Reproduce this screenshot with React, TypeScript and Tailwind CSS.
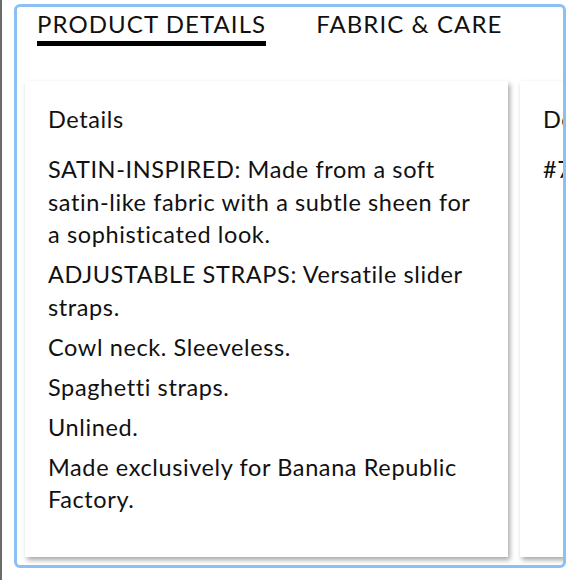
import React from "react";

const items = [
  "SATIN-INSPIRED: Made from a soft satin-like fabric with a subtle sheen for a sophisticated look.",
  "ADJUSTABLE STRAPS: Versatile slider straps.",
  "Cowl neck. Sleeveless.",
  "Spaghetti straps.",
  "Unlined.",
  "Made exclusively for Banana Republic Factory.",
];

export default function App() {
  return (
    <div className="relative w-[580px] h-[580px] bg-white overflow-hidden" style={{ fontFamily: "Lato, 'Noto Sans', sans-serif" }}>
      <div className="absolute left-0 top-0 h-full w-[2px] bg-[#6b6b6b]" />
      <div className="ml-[14px] mt-[4px] w-[552px] h-[564px] border-[3px] border-[#8cc0f5] rounded-[6px] overflow-hidden flex flex-col">
        <div className="flex pl-[20px] pt-[1px] gap-[50px] text-[24px] tracking-[0.045em] text-[#111]">
          <div className="flex flex-col">
            <span className="leading-[32px]">PRODUCT DETAILS</span>
            <div className="h-[5px] bg-black mt-[1px]" />
          </div>
          <span className="leading-[32px]">FABRIC &amp; CARE</span>
        </div>
        <div className="flex gap-[12px] pl-[8px] mt-[35px] flex-1 pb-[8px]">
          <div className="w-[483px] shrink-0 bg-white shadow-[2px_3px_5px_rgba(0,0,0,0.35)] px-[23px] pt-[22px] text-[23.5px] tracking-[0.026em] text-[#111]">
            <div className="leading-[32px] mb-[18px]">Details</div>
            {items.map((t) => (
              <p key={t} className="leading-[32.5px] mb-[7.5px]">{t}</p>
            ))}
          </div>
          <div className="w-[483px] shrink-0 bg-white shadow-[2px_3px_5px_rgba(0,0,0,0.35)] px-[23px] pt-[22px] text-[23.5px] tracking-[0.026em] text-[#111]">
            <div className="leading-[32px] mb-[18px]">Description</div>
            <p className="leading-[32.5px]">#7</p>
          </div>
        </div>
      </div>
    </div>
  );
}
